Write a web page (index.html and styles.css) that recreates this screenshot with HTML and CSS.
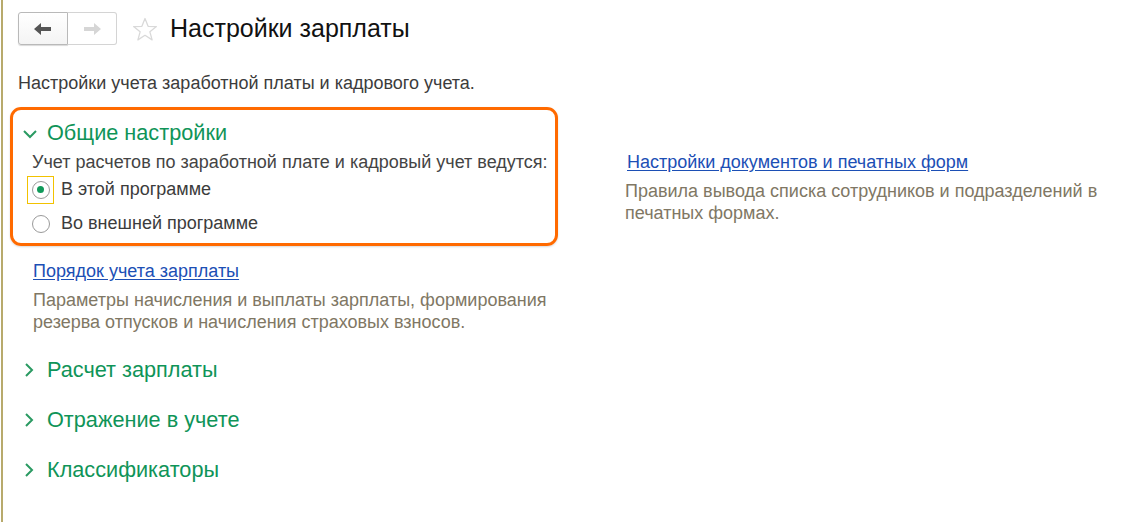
FILE: index.html
```html
<!DOCTYPE html>
<html lang="ru">
<head>
<meta charset="utf-8">
<link rel="stylesheet" href="styles.css">
</head>
<body>
<div class="page">
  <div class="header">
    <div class="nav">
      <button class="nav-btn back" aria-label="Назад">
        <svg width="18" height="12" viewBox="0 0 18 12"><path d="M0 6 L7 0 V4 H17 V8 H7 V12 Z" fill="#555"/></svg>
      </button>
      <button class="nav-btn fwd" aria-label="Вперед">
        <svg width="18" height="12" viewBox="0 0 18 12"><path d="M18 6 L11 0 V4 H1 V8 H11 V12 Z" fill="#d6d6d6"/></svg>
      </button>
    </div>
    <svg class="star" width="26" height="25" viewBox="0 0 26 25"><path d="M13 1.5 L16.1 9.3 L24.4 9.6 L17.9 14.8 L20.1 22.9 L13 18.3 L5.9 22.9 L8.1 14.8 L1.6 9.6 L9.9 9.3 Z" fill="none" stroke="#d9d9d9" stroke-width="1.3" stroke-linejoin="round"/></svg>
    <h1 class="title">Настройки зарплаты</h1>
  </div>

  <p class="intro">Настройки учета заработной платы и кадрового учета.</p>

  <div class="content">
    <div class="left">
      <div class="group-box">
        <div class="group-head">
          <svg class="chev" width="16" height="10" viewBox="0 0 16 10"><path d="M2 2 L8 8 L14 2" fill="none" stroke="#2a9a62" stroke-width="2"/></svg>
          <span class="group-title">Общие настройки</span>
        </div>
        <div class="group-body">
          <div class="label">Учет расчетов по заработной плате и кадровый учет ведутся:</div>
          <div class="radio-row">
            <span class="radio-focus"><span class="radio checked"><span class="dot"></span></span></span>
            <span class="radio-text">В этой программе</span>
          </div>
          <div class="radio-row second">
            <span class="radio-wrap"><span class="radio"></span></span>
            <span class="radio-text">Во внешней программе</span>
          </div>
        </div>
      </div>

      <div class="link-block">
        <a class="link" href="#">Порядок учета зарплаты</a>
        <p class="hint">Параметры начисления и выплаты зарплаты, формирования резерва отпусков и начисления страховых взносов.</p>
      </div>

      <div class="section">
        <svg class="chev-r" width="10" height="16" viewBox="0 0 10 16"><path d="M2 2 L8 8 L2 14" fill="none" stroke="#2a9a62" stroke-width="2"/></svg>
        <span class="group-title">Расчет зарплаты</span>
      </div>
      <div class="section">
        <svg class="chev-r" width="10" height="16" viewBox="0 0 10 16"><path d="M2 2 L8 8 L2 14" fill="none" stroke="#2a9a62" stroke-width="2"/></svg>
        <span class="group-title">Отражение в учете</span>
      </div>
      <div class="section">
        <svg class="chev-r" width="10" height="16" viewBox="0 0 10 16"><path d="M2 2 L8 8 L2 14" fill="none" stroke="#2a9a62" stroke-width="2"/></svg>
        <span class="group-title">Классификаторы</span>
      </div>
    </div>

    <div class="right">
      <a class="link" href="#">Настройки документов и печатных форм</a>
      <p class="hint">Правила вывода списка сотрудников и подразделений в печатных формах.</p>
    </div>
  </div>
</div>
</body>
</html>
```

FILE: styles.css
```css
* { box-sizing: border-box; }
html, body { margin: 0; padding: 0; background: #fff; }
body {
  font-family: "Liberation Sans", Arial, sans-serif;
  color: #4a4a4a;
  width: 1136px;
  height: 522px;
  overflow: hidden;
}
.page {
  margin-left: 1px;
  border-left: 2px solid #b8aa6c;
  height: 522px;
  padding-left: 7px;
}
.header {
  display: flex;
  align-items: center;
  padding-top: 12px;
  padding-left: 8px;
  height: 45px;
}
.nav {
  display: flex;
}
.nav-btn {
  width: 50px;
  height: 33px;
  border: 1px solid #d4d4d4;
  background: #fff;
  display: flex;
  align-items: center;
  justify-content: center;
  padding: 0;
  margin: 0;
}
.nav-btn.back {
  border-color: #b9b9b9;
  border-radius: 3px 0 0 3px;
  box-shadow: 0 1px 1px rgba(0,0,0,0.15);
  background: linear-gradient(#fff, #f4f4f4);
}
.nav-btn.fwd {
  border-left: none;
  border-radius: 0 3px 3px 0;
  width: 49px;
}
.star {
  margin-left: 15px;
  margin-top: 2px;
}
.title {
  margin: 0 0 0 12px;
  font-weight: normal;
  font-size: 25px;
  color: #111;
}
.intro {
  margin: 27px 0 0 8px;
  font-size: 18px;
  line-height: 22px;
  color: #3c3c3c;
}
.content {
  display: flex;
  margin-top: 13px;
}
.left {
  width: 548px;
}
.right {
  margin-left: 69px;
  padding-top: 44px;
}
.group-box {
  border: 3.5px solid #ff6a00;
  border-radius: 11px;
  height: 139px;
  padding: 9.5px 0 0 9px;
  box-shadow: 0 1px 2px rgba(0,0,0,0.15);
}
.group-head {
  display: flex;
  align-items: center;
  height: 26px;
}
.chev { margin-right: 9px; margin-top: 2px; }
.group-title {
  font-size: 21.7px;
  color: #0f9458;
}
.group-body {
  padding-left: 10px;
  margin-top: 5px;
}
.label {
  font-size: 18px;
  line-height: 22px;
  color: #444;
}
.radio-row {
  display: flex;
  align-items: center;
  height: 28px;
  margin-top: 3px;
}
.radio-row.second { margin-top: 8px; height: 24px; }
.radio-focus {
  width: 27px;
  height: 28px;
  border: 1px solid #f2c200;
  margin-left: -5px;
  display: flex;
  align-items: center;
  justify-content: center;
}
.radio-wrap {
  width: 27px;
  height: 24px;
  margin-left: -5px;
  display: flex;
  align-items: center;
  justify-content: center;
}
.radio {
  width: 18px;
  height: 18px;
  border: 1px solid #9a9a9a;
  border-radius: 50%;
  background: #fff;
  display: flex;
  align-items: center;
  justify-content: center;
}
.radio .dot {
  width: 7px;
  height: 7px;
  border-radius: 50%;
  background: #109a5a;
}
.radio-text {
  font-size: 18px;
  color: #3c3c3c;
  margin-left: 7px;
}
.link-block {
  padding-left: 23px;
  margin-top: 14px;
}
.link {
  font-size: 18px;
  line-height: 22px;
  color: #1c4fb5;
  text-decoration: underline;
  text-underline-offset: 2px;
}
.hint {
  margin: 7px 0 0 0;
  font-size: 18px;
  line-height: 22px;
  color: #807764;
}
.right .hint { width: 480px; margin-left: -2px; }
.section {
  display: flex;
  align-items: center;
  margin-top: 24px;
  padding-left: 14px;
  height: 26px;
}
.section:first-of-type { margin-top: 24px; }
.chev-r { margin-right: 13px; }
```
